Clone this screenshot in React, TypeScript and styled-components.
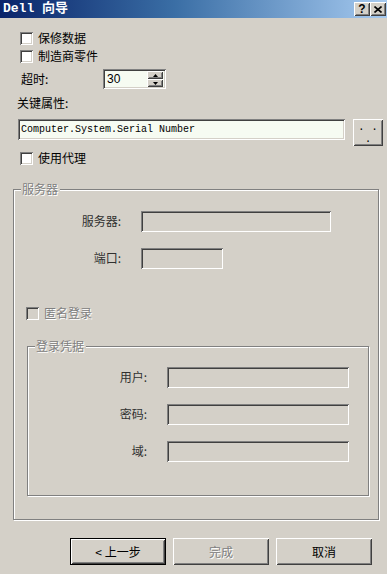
import React from "react";
import styled, { createGlobalStyle, css } from "styled-components";

const GlobalStyle = createGlobalStyle`
  html, body { margin: 0; padding: 0; background: #d4d0c8; }
  body { font-family: "Noto Sans CJK SC", "Liberation Sans", sans-serif; font-size: 12px; color: #000; }
`;

const sunken = css`
  box-shadow: inset 1px 1px #808080, inset -1px -1px #ffffff,
    inset 2px 2px #404040, inset -2px -2px #d4d0c8;
`;

const raised = css`
  box-shadow: inset 1px 1px #ffffff, inset -1px -1px #404040,
    inset 2px 2px #d4d0c8, inset -2px -2px #808080;
`;

const disabledText = css`
  color: #808080;
  text-shadow: 1px 1px 0 #ffffff;
`;

const Window = styled.div`
  width: 387px;
  height: 574px;
  display: flex;
  flex-direction: column;
  background: #d4d0c8;
  overflow: hidden;
`;

const TitleBar = styled.div`
  height: 18px;
  flex: none;
  display: flex;
  align-items: center;
  padding: 0 1px 0 3px;
  background: linear-gradient(to right, #0a246a 0%, #3a6ea5 45%, #a6caf0 100%);
`;

const Title = styled.div`
  flex: 1;
  color: #ffffff;
  font-family: "Liberation Mono", "Noto Sans CJK SC", monospace;
  font-weight: bold;
  font-size: 13px;
  line-height: 18px;
  white-space: pre;
`;

const TitleButtons = styled.div`
  display: flex;
`;

const TitleButton = styled.div`
  width: 16px;
  height: 14px;
  box-sizing: border-box;
  display: flex;
  align-items: center;
  justify-content: center;
  background: #d4d0c8;
  ${raised};
  font-family: "Liberation Sans", sans-serif;
  font-weight: bold;
  font-size: 12px;
  line-height: 14px;
  color: #000;
`;

const Content = styled.div`
  display: flex;
  flex-direction: column;
  padding-top: 11px;
`;

const CheckRow = styled.label<{ $indent: number; $top?: number; $disabled?: boolean }>`
  display: flex;
  align-items: center;
  gap: 5px;
  height: 18px;
  margin-left: ${(p) => p.$indent}px;
  margin-top: ${(p) => p.$top ?? 0}px;
  line-height: 14px;
  ${(p) => p.$disabled && disabledText};
`;

const CheckBox = styled.span<{ $disabled?: boolean }>`
  width: 13px;
  height: 13px;
  box-sizing: border-box;
  flex: none;
  background: ${(p) => (p.$disabled ? "#d4d0c8" : "#ffffff")};
  ${sunken};
`;

const TimeoutRow = styled.div`
  display: grid;
  grid-template-columns: 82px auto;
  align-items: center;
  height: 20px;
  margin-top: 4px;
  padding-left: 21px;
`;

const Label = styled.span<{ $muted?: boolean }>`
  line-height: 14px;
  white-space: nowrap;
  color: ${(p) => (p.$muted ? "#303030" : "#000")};
`;

const Spinner = styled.div`
  width: 63px;
  height: 20px;
  box-sizing: border-box;
  padding: 2px;
  display: flex;
  background: #f6fbf2;
  ${sunken};
`;

const SpinValue = styled.span`
  flex: 1;
  padding-left: 2px;
  font-family: "Liberation Sans", sans-serif;
  font-size: 12px;
  line-height: 16px;
`;

const SpinButtons = styled.div`
  width: 16px;
  display: flex;
  flex-direction: column;
  margin-right: 1px;
`;

const SpinButton = styled.div`
  height: 8px;
  box-sizing: border-box;
  display: flex;
  align-items: center;
  justify-content: center;
  background: #d4d0c8;
  ${raised};
`;

const KeyLabel = styled.div`
  margin-top: 7px;
  margin-left: 17px;
  line-height: 14px;
`;

const KeyRow = styled.div`
  display: flex;
  align-items: flex-start;
  gap: 8px;
  margin-top: 9px;
  padding-left: 18px;
`;

const TextBox = styled.div<{ $width: number; $disabled?: boolean; $height?: number }>`
  width: ${(p) => p.$width}px;
  height: ${(p) => p.$height ?? 21}px;
  box-sizing: border-box;
  padding: 2px 3px;
  background: ${(p) => (p.$disabled ? "#d4d0c8" : "#f6fbf2")};
  ${sunken};
  font-family: "Liberation Mono", monospace;
  font-size: 10px;
  line-height: 17px;
  white-space: pre;
  overflow: hidden;
`;

const DotsButton = styled.div`
  width: 30px;
  height: 27px;
  box-sizing: border-box;
  display: flex;
  flex-direction: column;
  align-items: center;
  justify-content: center;
  background: #d4d0c8;
  ${raised};
  font-family: "Liberation Mono", monospace;
  font-size: 11px;
  line-height: 12px;
  white-space: pre;
`;

const DotLine = styled.span`
  display: block;
  line-height: 12px;
`;

const Group = styled.div<{ $left: number; $top: number; $width: number; $height: number; $padTop: number }>`
  position: relative;
  box-sizing: border-box;
  margin-left: ${(p) => p.$left}px;
  margin-top: ${(p) => p.$top}px;
  width: ${(p) => p.$width}px;
  height: ${(p) => p.$height}px;
  padding-top: ${(p) => p.$padTop}px;
  border: 1px solid #808080;
  box-shadow: inset 1px 1px #ffffff, 1px 1px #ffffff;
  display: flex;
  flex-direction: column;
`;

const Legend = styled.span`
  position: absolute;
  top: -8px;
  left: 7px;
  padding: 0 2px 0 1px;
  background: #d4d0c8;
  line-height: 14px;
  ${disabledText};
`;

const FieldRow = styled.div<{ $labelWidth: number; $top: number }>`
  display: grid;
  grid-template-columns: ${(p) => p.$labelWidth}px auto;
  column-gap: 20px;
  align-items: start;
  margin-top: ${(p) => p.$top}px;
`;

const FieldLabel = styled(Label)`
  justify-self: end;
  padding-top: 3px;
`;

const ButtonBar = styled.div`
  display: flex;
  gap: 7px;
  margin-top: 18px;
  padding-left: 70px;
`;

const DialogButton = styled.div<{ $default?: boolean; $disabled?: boolean }>`
  width: 96px;
  height: 27px;
  box-sizing: border-box;
  display: flex;
  align-items: center;
  justify-content: center;
  background: #d4d0c8;
  line-height: 14px;
  ${raised};
  ${(p) =>
    p.$default &&
    css`
      border: 1px solid #000;
    `};
  ${(p) => p.$disabled && disabledText};
`;

const Arrow = ({ up }: { up?: boolean }) => (
  <svg width="5" height="3" viewBox="0 0 5 3">
    <path d={up ? "M0 3 L5 3 L2.5 0 Z" : "M0 0 L5 0 L2.5 3 Z"} fill="#000" />
  </svg>
);

const CloseGlyph = () => (
  <svg width="8" height="7" viewBox="0 0 8 7">
    <path d="M0.5 0.5 L7.5 6.5 M7.5 0.5 L0.5 6.5" stroke="#000" strokeWidth="1.6" />
  </svg>
);

export default function App() {
  return (
    <>
      <GlobalStyle />
      <Window>
        <TitleBar>
          <Title>Dell 向导</Title>
          <TitleButtons>
            <TitleButton>?</TitleButton>
            <TitleButton>
              <CloseGlyph />
            </TitleButton>
          </TitleButtons>
        </TitleBar>
        <Content>
          <CheckRow $indent={20}>
            <CheckBox />
            <span>保修数据</span>
          </CheckRow>
          <CheckRow $indent={20}>
            <CheckBox />
            <span>制造商零件</span>
          </CheckRow>
          <TimeoutRow>
            <Label>超时:</Label>
            <Spinner>
              <SpinValue>30</SpinValue>
              <SpinButtons>
                <SpinButton>
                  <Arrow up />
                </SpinButton>
                <SpinButton>
                  <Arrow />
                </SpinButton>
              </SpinButtons>
            </Spinner>
          </TimeoutRow>
          <KeyLabel>关键属性:</KeyLabel>
          <KeyRow>
            <TextBox $width={327}>Computer.System.Serial Number</TextBox>
            <DotsButton>
              <DotLine>. .</DotLine>
              <DotLine>.</DotLine>
            </DotsButton>
          </KeyRow>
          <CheckRow $indent={20} $top={3}>
            <CheckBox />
            <span>使用代理</span>
          </CheckRow>

          <Group $left={13} $top={22} $width={366} $height={331} $padTop={21}>
            <Legend>服务器</Legend>
            <FieldRow $labelWidth={107} $top={0}>
              <FieldLabel $muted>服务器:</FieldLabel>
              <TextBox $width={190} $disabled />
            </FieldRow>
            <FieldRow $labelWidth={107} $top={16}>
              <FieldLabel $muted>端口:</FieldLabel>
              <TextBox $width={82} $disabled />
            </FieldRow>
            <CheckRow $indent={12} $top={35} $disabled>
              <CheckBox $disabled />
              <span>匿名登录</span>
            </CheckRow>
            <Group $left={13} $top={24} $width={342} $height={150} $padTop={20}>
              <Legend>登录凭据</Legend>
              <FieldRow $labelWidth={119} $top={0}>
                <FieldLabel $muted>用户:</FieldLabel>
                <TextBox $width={182} $disabled />
              </FieldRow>
              <FieldRow $labelWidth={119} $top={16}>
                <FieldLabel $muted>密码:</FieldLabel>
                <TextBox $width={182} $disabled />
              </FieldRow>
              <FieldRow $labelWidth={119} $top={16}>
                <FieldLabel $muted>域:</FieldLabel>
                <TextBox $width={182} $disabled />
              </FieldRow>
            </Group>
          </Group>

          <ButtonBar>
            <DialogButton $default>&lt; 上一步</DialogButton>
            <DialogButton $disabled>完成</DialogButton>
            <DialogButton>取消</DialogButton>
          </ButtonBar>
        </Content>
      </Window>
    </>
  );
}
